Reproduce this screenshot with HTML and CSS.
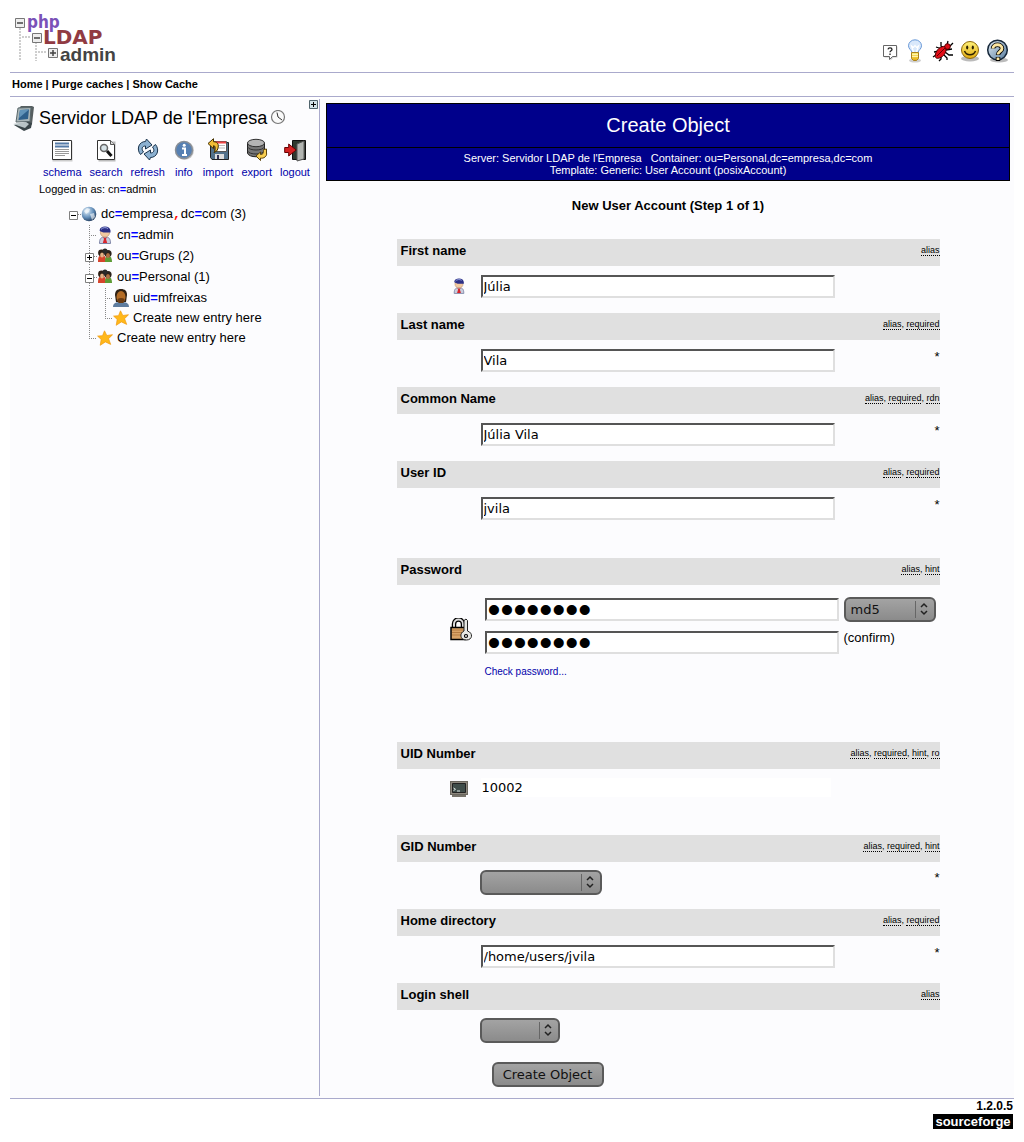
FILE: index.html
```html
<!DOCTYPE html>
<html lang="en">
<head>
<meta charset="utf-8">
<title>phpLDAPadmin - Create Object</title>
<link rel="stylesheet" href="styles.css">
</head>
<body>
<svg class="defs" aria-hidden="true">
  <defs>
    <linearGradient id="steel" x1="0" y1="0" x2="1" y2="1"><stop offset="0" stop-color="#e4eef6"/><stop offset="1" stop-color="#54799c"/></linearGradient>
    <linearGradient id="gold" x1="0" y1="0" x2="0" y2="1"><stop offset="0" stop-color="#fff27a"/><stop offset="1" stop-color="#e2ab10"/></linearGradient>
    <radialGradient id="orb" cx=".35" cy=".3" r=".8"><stop offset="0" stop-color="#e3f1fb"/><stop offset=".55" stop-color="#6590bb"/><stop offset="1" stop-color="#142c4c"/></radialGradient>
  </defs>
  <symbol id="person" viewBox="0 0 16 18">
    <path d="M2.500 17.500C2.500 12.500 4 11 8 11s5.500 1.500 5.500 6.500z" fill="#c9cede" stroke="#8087a8"/>
    <path d="M6 11l2 1 2-1-1 2 1.200 4H5.800L7 13z" fill="#d8252c"/>
    <circle cx="8" cy="6.500" r="4.600" fill="#f2c9a0" stroke="#b78964" stroke-width=".6"/>
    <path d="M2.500 4.500C3 1.500 5 .5 8 .5s5 1.200 5.500 4v2H8c-2 0-4-.5-5.500-2z" fill="#2c2f86"/>
    <path d="M4 3.500C5 1.500 9 1 11 2.500" stroke="#9ba9e0" fill="none"/>
  </symbol>
  <symbol id="group" viewBox="0 0 16 16">
    <path d="M1 14c0-5 1-7 4-7s4 2 4 7z" fill="#d6442c"/>
    <path d="M8 14c0-5 1-6 3.500-6s3.500 2 3.500 6z" fill="#5d9b35"/>
    <circle cx="4.500" cy="5" r="3.400" fill="#2d1f16"/><circle cx="11" cy="5.500" r="3.600" fill="#2b211a"/><circle cx="8" cy="3" r="2.500" fill="#292929"/>
    <ellipse cx="5" cy="7" rx="1.900" ry="2.500" fill="#e5b184"/><ellipse cx="11" cy="7.500" rx="2" ry="2.500" fill="#ad7042"/>
  </symbol>
  <symbol id="star" viewBox="0 0 16 16">
    <path d="M7.500.8l2.300 4.700 5.700-.8-3.900 4 2.100 5.700-5.300-2.500-5.200 3.400 1-5.900L.6 6.100l4.900-.4z" fill="#ffb81a" stroke="#f09a10" stroke-width=".7"/>
  </symbol>
  <symbol id="line-tee" viewBox="0 0 16 20"><path d="M8.500 0v20M10 10.500h6" stroke="#888" stroke-dasharray="1 1" fill="none"/></symbol>
  <symbol id="line-end" viewBox="0 0 16 20"><path d="M8.500 0v11M10 10.500h6" stroke="#888" stroke-dasharray="1 1" fill="none"/></symbol>
  <symbol id="line-down" viewBox="0 0 16 20"><path d="M8.500 0v20" stroke="#888" stroke-dasharray="1 1" fill="none"/></symbol>
  <symbol id="box-root" viewBox="0 0 16 20"><path d="M13 10.500h3" stroke="#888" stroke-dasharray="1 1"/><path d="M4.500 7.500h8v8h-8z" fill="#fff" stroke="#808080"/><path d="M6 11.500h5" stroke="#000"/></symbol>
  <symbol id="box-minus" viewBox="0 0 16 20"><path d="M8.500 0v20M13 10.500h3" stroke="#888" stroke-dasharray="1 1"/><path d="M4.500 7.500h8v8h-8z" fill="#fff" stroke="#808080"/><path d="M6 11.500h5" stroke="#000"/></symbol>
  <symbol id="box-plus" viewBox="0 0 16 20"><path d="M8.500 0v20M13 10.500h3" stroke="#888" stroke-dasharray="1 1"/><path d="M4.500 7.500h8v8h-8z" fill="#fff" stroke="#808080"/><path d="M6 11.500h5M8.500 9v5" stroke="#000"/></symbol>
</svg>

<header class="top">
  <a class="logo" href="#" aria-label="phpLDAPadmin">
    <svg width="110" height="56" viewBox="0 0 110 56">
      <path d="M10 18v33M26 32v19M12 27h9M28 42h9" stroke="#cfcfcf" stroke-width="2" stroke-dasharray="2 1" fill="none"/>
      <g fill="#eee" stroke="#777"><path d="M5.500 8.500h9v9h-9zM22.500 23.500h9v9h-9zM38.500 38.500h9v9h-9z"/></g>
      <path d="M7 13h6M24 28h6M40 43h6M43 40v6" stroke="#444" stroke-width="1.500"/>
      <text class="logo-php" x="17" y="18">php</text>
      <text class="logo-ldap" x="33" y="34">LDAP</text>
      <text class="logo-admin" x="50" y="51">admin</text>
    </svg>
  </a>
  <nav class="top-icons" aria-label="Tools">
    <a href="#" aria-label="Request feature">
      <svg width="18" height="20" viewBox="0 0 18 20"><path d="M2.500 5.500h13v11h-4l-3 3v-3h-6z" fill="#999" opacity=".5"/><path d="M1.500 4.500h13v11h-4L7.500 18.500v-3h-6z" fill="#fff" stroke="#666"/><path d="M6 8.300c.3-1.800 4-1.800 4 .2 0 1.300-2 1.200-2 2.700M8 12.500v1.500" fill="none" stroke="#222" stroke-width="1.300"/></svg>
    </a>
    <a href="#" aria-label="Hints">
      <svg width="20" height="24" viewBox="0 0 20 24"><ellipse cx="9" cy="21.500" rx="6" ry="2" fill="#888" opacity=".4"/><path d="M6 13.500C5.500 11 2.500 10 2.500 6.800a6.500 6 0 0 1 13 0c0 3.200-3 4.200-3.500 6.700z" fill="#d9e8fb" stroke="#6a9ad8"/><path d="M7.500 13L5.500 7l2 1.500L9 6.500l1.500 2 2-1.500-2 6" fill="none" stroke="#fff" stroke-width="1.200"/><path d="M5.500 13.500h7v6l-2 2h-3l-2-2z" fill="url(#gold)" stroke="#aa831d"/><path d="M6 15.500h6M6 17.500h6" stroke="#fff3ad"/></svg>
    </a>
    <a href="#" aria-label="Report a bug">
      <svg width="22" height="22" viewBox="0 0 22 22"><path d="M17 7l4-4M15 5l1-4M12 9L9 6V2M14 10l6-1M10 9L4 7M13 12l4 3h4M8 11L2 12M7 13l-6 4M9 16v3l-2 2M12 15l3 3v2" stroke="#000" stroke-width="1.300" fill="none"/><path d="M3.500 14c1-4 5-8.500 10-7.500 2 5-1.500 10-6 11.500-3 1-5 0-4-4z" fill="#e00d17" stroke="#400"/><circle cx="15.500" cy="6.500" r="2.800" fill="#e00d17" stroke="#500"/><path d="M5 16l8-8" stroke="#600"/></svg>
    </a>
    <a href="#" aria-label="Donate">
      <svg width="20" height="22" viewBox="0 0 20 22"><ellipse cx="10" cy="18.500" rx="9" ry="3" fill="#777" opacity=".5"/><circle cx="10" cy="10" r="8.500" fill="url(#gold)" stroke="#8e6808"/><ellipse cx="7.200" cy="7.500" rx="1.100" ry="2" fill="#2c2000"/><ellipse cx="12.800" cy="7.500" rx="1.100" ry="2" fill="#2c2000"/><path d="M4.500 11c2 5 9 5 11 0" fill="none" stroke="#2c2000" stroke-width="1.500"/></svg>
    </a>
    <a href="#" aria-label="Help">
      <svg width="24" height="24" viewBox="0 0 24 24"><ellipse cx="13" cy="21" rx="9" ry="2.500" fill="#777" opacity=".5"/><circle cx="11.500" cy="11" r="9.800" fill="url(#steel)" stroke="#17283a" stroke-width="1.500"/><path d="M7 9.500c0-5 9-5 9 0 0 3-4 3-4 6.500M12 18v4" fill="none" stroke="#000" stroke-width="4.500"/><path d="M7 9.500c0-5 9-5 9 0 0 3-4 3-4 6M12 18.500v2.500" fill="none" stroke="#fbe5a0" stroke-width="2.800"/></svg>
    </a>
  </nav>
</header>
<nav class="menu"><a href="#">Home</a> | <a href="#">Purge caches</a> | <a href="#">Show Cache</a></nav>

<div class="layout">
  <aside class="sidebar">
    <button class="expand" type="button" aria-label="Expand tree"><svg width="9" height="9" viewBox="0 0 9 9"><path d="M.5.500h8v8h-8z" fill="#d3e3e8" stroke="#50646c"/><path d="M2 4.500h5M4.500 2v5" stroke="#000"/></svg></button>
    <div class="server">
      <svg width="24" height="26" viewBox="0 0 24 26"><path d="M6 4l3-3h11l2 1-2 17-4 5-2-6z" fill="#565e60"/><path d="M6 3l13-.5-1 14L4 17z" fill="#a9b5b8" stroke="#58666a"/><path d="M8 5l9-.5-1 9.500L6.500 15z" fill="#2e5f8b"/><path d="M8 5l9-.5L7 13z" fill="#6193b9"/><path d="M2 20l14-3 4 1-1 5-7 3z" fill="#3a4549"/><path d="M1 19l13-2 3 2-4 4z" fill="#b8c3c6"/></svg>
      <h2>Servidor LDAP de l'Empresa</h2>
      <svg width="16" height="16" viewBox="0 0 16 16"><circle cx="8" cy="7" r="6.500" fill="#fafafa" stroke="#777" stroke-width="1.200"/><path d="M7 2.500L8 7l4 3" fill="none" stroke="#333"/></svg>
    </div>
    <nav class="tools" aria-label="Server actions">
      <a href="#"><svg width="22" height="24" viewBox="0 0 22 24"><path d="M1.500 3.500h20v20h-20z" fill="#ccc"/><path d="M1.500 2.500h19v19h-19z" fill="#fff" stroke="#333"/><path d="M4 5.500h14M4 8.500h14" stroke="#547ba8" stroke-width="2"/><path d="M4 11.500h14M4 13.500h14M4 15.500h14M4 17.500h10" stroke="#999"/></svg>schema</a>
      <a href="#"><svg width="22" height="24" viewBox="0 0 22 24"><path d="M3.500 3.500h17v20h-17z" fill="#bbb"/><path d="M2.500 2.500h13l4 4v15h-17z" fill="#fff" stroke="#333"/><path d="M15.500 2.500v4h4" fill="#ddd" stroke="#555"/><circle cx="9" cy="10" r="3.500" fill="#d7e3e7" stroke="#666" stroke-width="1.500"/><path d="M12 13l4.500 5" stroke="#111" stroke-width="3"/></svg>search</a>
      <a href="#"><svg width="22" height="24" viewBox="0 0 22 24"><g fill="#8cb1d1" stroke="#1a334b"><path d="M3.500 16.500C-1 11 2 3.500 8.500 3.500l1-2.500 5.500 6-6.500 4V8C5 8 4 11 6.500 14z"/><path d="M18.500 6.500c4.500 5.500 1.500 13-5 13l-1 2.500L7 16l6.500-4v3c3.500 0 4.500-3 2-6z"/></g></svg>refresh</a>
      <a href="#"><svg width="22" height="24" viewBox="0 0 22 24"><circle cx="11.500" cy="12.500" r="9.500" fill="#ccc"/><circle cx="11" cy="12" r="8.500" fill="#5680b3" stroke="#8a8f96" stroke-width="1.500"/><path d="M9 10.500h3v6M9 17h5" stroke="#fff" stroke-width="2" fill="none"/><circle cx="11.200" cy="7.200" r="1.500" fill="#fff"/></svg>info</a>
      <a href="#"><svg width="22" height="24" viewBox="0 0 22 24"><path d="M3.500 4.500h18v17H5l-1.500-2z" fill="#52718b" stroke="#222"/><path d="M7.500 3.500h12v10h-12z" fill="#fff" stroke="#555"/><path d="M8 4.500h11" stroke="#e44" stroke-width="2"/><path d="M9 7.500h9M9 10h9" stroke="#bbb"/><path d="M8 16h9v5H8z" fill="#ddd"/><path d="M10 17h2v4h-2z" fill="#335"/><path d="M1 5.500L6.500.7v3c5 0 6 4 3.500 9l-3 2c2-4 1.500-7-.5-7v3z" fill="#f1bd35" stroke="#443000"/></svg>import</a>
      <a href="#"><svg width="22" height="24" viewBox="0 0 22 24"><path d="M1.500 5v10c1 5 16 5 17 0V5z" fill="#777" stroke="#222"/><ellipse cx="10" cy="5" rx="8.500" ry="3.700" fill="#b5b5b5" stroke="#333"/><path d="M1.500 9c2 4 15 4 17 0M1.500 13c2 4 15 4 17 0" fill="none" stroke="#333"/><path d="M20.500 11v4c1 3-3 6-6 5v2.500L10 18l4.500-4v2.500c3 0 3-2 3-5z" fill="#f8ce51" stroke="#5b430b"/></svg>export</a>
      <a href="#"><svg width="22" height="24" viewBox="0 0 22 24"><path d="M8.500 2.500h13v19h-13z" fill="#30392e" stroke="#111"/><path d="M13 6l7-3v18l-7 2z" fill="#b2b5b1" stroke="#555"/><path d="M.7 9.500h4V6l7.500 6-7.500 6v-3.500h-4z" fill="#d32222" stroke="#670000"/></svg>logout</a>
    </nav>
    <p class="login"><span>Logged in as:</span> cn<b>=</b>admin</p>

    <ul class="tree">
      <li><svg class="cell"><use href="#box-root"/></svg><svg class="icon" viewBox="0 0 16 16"><circle cx="8" cy="8" r="7.300" fill="url(#orb)"/><path d="M3 5l3-3 3 1-1 3-3 2zM9 8l4-1 1 4-3 3z" fill="#fff" opacity=".6"/></svg><a href="#">dc<b>=</b>empresa<i>,</i>dc<b>=</b>com (3)</a></li>
      <li><span class="cell"></span><svg class="cell"><use href="#line-tee"/></svg><svg class="icon tall"><use href="#person"/></svg><a href="#">cn<b>=</b>admin</a></li>
      <li><span class="cell"></span><svg class="cell"><use href="#box-plus"/></svg><svg class="icon"><use href="#group"/></svg><a href="#">ou<b>=</b>Grups (2)</a></li>
      <li><span class="cell"></span><svg class="cell"><use href="#box-minus"/></svg><svg class="icon"><use href="#group"/></svg><a href="#">ou<b>=</b>Personal (1)</a></li>
      <li><span class="cell"></span><svg class="cell"><use href="#line-down"/></svg><svg class="cell"><use href="#line-tee"/></svg><svg class="icon tall" viewBox="0 0 16 18"><path d="M0 18c0-4 3-5 8-5s8 1 8 5z" fill="#5d7c9f"/><path d="M2 6c0-4 2-6 6-6s6 2 6 6l-1 7H3z" fill="#2e2014"/><ellipse cx="8" cy="8" rx="4.500" ry="6" fill="#b36c26"/><path d="M4.500 10c2-1.500 5-1.500 7 0L10.500 14h-5z" fill="#6b3b12"/></svg><a href="#">uid<b>=</b>mfreixas</a></li>
      <li class="create"><span class="cell"></span><svg class="cell"><use href="#line-down"/></svg><svg class="cell"><use href="#line-end"/></svg><svg class="icon"><use href="#star"/></svg><a href="#">Create new entry here</a></li>
      <li class="create"><span class="cell"></span><svg class="cell"><use href="#line-end"/></svg><svg class="icon"><use href="#star"/></svg><a href="#">Create new entry here</a></li>
    </ul>
  </aside>

  <main class="content">
    <div class="banner">
      <h1>Create Object</h1>
      <p>Server: <strong>Servidor LDAP de l'Empresa</strong> &nbsp; Container: <strong>ou=Personal,dc=empresa,dc=com</strong><br>Template: <strong>Generic: User Account</strong> (<strong>posixAccount</strong>)</p>
    </div>
    <h3 class="step">New User Account (Step 1 of 1)</h3>
    <form class="form">
      <section class="field">
        <div class="bar"><label for="first">First name</label><span class="notes"><abbr>alias</abbr></span></div>
        <div class="row"><span class="lead"><svg width="14" height="16"><use href="#person"/></svg></span><input class="text" id="first" type="text" value="Júlia"></div>
      </section>
      <section class="field">
        <div class="bar"><label for="last">Last name</label><span class="notes"><abbr>alias</abbr>, <abbr>required</abbr></span></div>
        <div class="row"><span class="lead"></span><input class="text" id="last" type="text" value="Vila"><span class="mark">*</span></div>
      </section>
      <section class="field">
        <div class="bar"><label for="common">Common Name</label><span class="notes"><abbr>alias</abbr>, <abbr>required</abbr>, <abbr>rdn</abbr></span></div>
        <div class="row"><span class="lead"></span><input class="text" id="common" type="text" value="Júlia Vila"><span class="mark">*</span></div>
      </section>
      <section class="field spaced">
        <div class="bar"><label for="user">User ID</label><span class="notes"><abbr>alias</abbr>, <abbr>required</abbr></span></div>
        <div class="row"><span class="lead"></span><input class="text" id="user" type="text" value="jvila"><span class="mark">*</span></div>
      </section>
      <section class="field password">
        <div class="bar"><label for="pass">Password</label><span class="notes"><abbr>alias</abbr>, <abbr>hint</abbr></span></div>
        <div class="row">
          <span class="lead"><svg width="24" height="24" viewBox="0 0 24 24"><path d="M5 10V6c0-6 9-6 9 0v4" fill="none" stroke="#000" stroke-width="4.500"/><path d="M5 10V6c0-6 9-6 9 0v4" fill="none" stroke="#ddd" stroke-width="2"/><path d="M2 9.500h14v12H2z" fill="#d9a468" stroke="#000" stroke-width="1.500"/><path d="M3 12h12M3 14.500h12M3 17h12" stroke="#b57c42"/><path d="M15 2.500l2-1.500 1.500 1.500V13c6 2 5 9-1 9-7 0-7-7-2.500-9z" fill="#e7e8e4" stroke="#222"/><circle cx="17" cy="18" r="1.500" fill="#fff" stroke="#000" stroke-width="1.200"/></svg></span>
          <div class="secrets">
            <input class="text" id="pass" type="password" value="jvila123">
            <select class="enc" aria-label="Encryption"><option>md5</option></select>
            <input class="text" id="confirm" type="password" value="jvila123">
            <label for="confirm">(confirm)</label>
            <a class="check" href="#">Check password...</a>
          </div>
        </div>
      </section>
      <section class="field tall-row">
        <div class="bar"><label for="uid">UID Number</label><span class="notes"><abbr>alias</abbr>, <abbr>required</abbr>, <abbr>hint</abbr>, <abbr>ro</abbr></span></div>
        <div class="row"><span class="lead"><svg width="18" height="16" viewBox="0 0 18 16"><path d="M0 0h18v14h-2v2H2v-2H0z" fill="#77736a"/><path d="M.5.500h17v13H.5z" fill="#8d887e" stroke="#6b675f"/><path d="M2.500 2.500h13v9h-13z" fill="#3f4d4a" stroke="#222"/><path d="M3.500 7l2 1.300-2 1.300M7 10h3" fill="none" stroke="#dfe8e4"/></svg></span><input class="plain" id="uid" type="text" value="10002" readonly></div>
      </section>
      <section class="field">
        <div class="bar"><label for="gid">GID Number</label><span class="notes"><abbr>alias</abbr>, <abbr>required</abbr>, <abbr>hint</abbr></span></div>
        <div class="row pick"><span class="lead"></span><select class="gid" id="gid"><option></option></select><span class="mark">*</span></div>
      </section>
      <section class="field">
        <div class="bar"><label for="home">Home directory</label><span class="notes"><abbr>alias</abbr>, <abbr>required</abbr></span></div>
        <div class="row"><span class="lead"></span><input class="text" id="home" type="text" value="/home/users/jvila"><span class="mark">*</span></div>
      </section>
      <section class="field">
        <div class="bar"><label for="shell">Login shell</label><span class="notes"><abbr>alias</abbr></span></div>
        <div class="row pick"><span class="lead"></span><select class="shell" id="shell"><option></option></select></div>
      </section>
      <button class="submit" type="submit">Create Object</button>
    </form>
  </main>
</div>

<footer class="foot">
  <span class="version">1.2.0.5</span>
  <a class="sf" href="#">sourceforge</a>
</footer>
</body>
</html>
```
FILE: styles.css
```css
* { box-sizing: border-box; }

body {
  margin: 0;
  padding: 10px;
  background: #fff;
  color: #000;
  font: 12px/16px "Liberation Sans", Arial, sans-serif;
}

a { color: inherit; text-decoration: none; }
h1, h2, h3, p, ul { margin: 0; padding: 0; font-weight: normal; }
svg { display: block; flex: none; }
.defs { position: absolute; width: 0; height: 0; }

/* header */
.top {
  display: flex;
  justify-content: space-between;
  height: 63px;
  border-bottom: 1px solid #aaaacc;
}
.logo-php { font: bold 17px "DejaVu Sans Condensed", "DejaVu Sans", sans-serif; fill: #7a52b8; }
.logo-ldap { font: bold 20px "DejaVu Sans", sans-serif; fill: #913b43; }
.logo-admin { font: bold 19px "Liberation Sans", sans-serif; fill: #444; }
.top-icons {
  display: flex;
  align-items: center;
  gap: 6px;
  padding: 20px 4px 0 0;
}
.menu {
  height: 24px;
  padding-left: 2px;
  border-bottom: 1px solid #aaaacc;
  font-size: 11px;
  font-weight: bold;
  line-height: 23px;
}

/* columns */
.layout {
  display: grid;
  grid-template-columns: 310px 1fr;
  margin-top: 2px;
  padding-bottom: 2px;
  background: #fcfcfe;
  border-bottom: 1px solid #aaaacc;
}
.sidebar {
  position: relative;
  border-right: 1px solid #aaaacc;
}
.expand {
  position: absolute;
  top: 1px;
  right: 1px;
  padding: 0;
  border: 0;
  background: none;
}
.server {
  display: flex;
  align-items: center;
  gap: 3px;
  padding: 6px 0 0 2px;
}
.server h2 { font-size: 18px; line-height: 24px; }
.tools {
  display: flex;
  gap: 8px;
  padding: 7px 0 0 33px;
  color: #0000aa;
  font-size: 11px;
}
.tools a { display: flex; flex-direction: column; align-items: center; gap: 2px; }
.login { padding: 2px 0 0 29px; font-size: 11px; line-height: 15px; }
.login b, .tree b { color: #0000ff; }

.tree { padding: 6px 0 0 55px; list-style: none; font-size: 13px; }
.tree li { display: flex; align-items: center; height: 21px; }
.tree .create { height: 20px; }
.tree .cell { flex: none; width: 16px; height: 20px; }
.tree .icon { width: 16px; height: 16px; margin-right: 4px; }
.tree .tall { height: 18px; }
.tree i { color: #ff0000; font: bold 13px "Liberation Mono", monospace; }

/* main */
.content { padding: 4px 4px 9px 6px; }
.banner {
  background: #00008b;
  border: 1px solid #000;
  color: #fff;
  text-align: center;
}
.banner h1 { font-size: 20px; line-height: 43px; border-bottom: 1px solid #000; }
.banner p { padding: 4px 0; font-size: 11px; line-height: 12px; }
.banner strong { font-weight: normal; }
.step { padding: 17px 0 25px; font-size: 13px; font-weight: bold; text-align: center; }

.form { max-width: 543px; margin: 0 auto; }
.bar {
  display: flex;
  justify-content: space-between;
  height: 27px;
  padding: 4px 0 0 4px;
  background: #e0e0e0;
}
.bar label { font-size: 13px; font-weight: bold; }
.notes { font-size: 9px; line-height: 14px; }
.notes abbr { border-bottom: 1px dotted #000; }
.row { display: flex; align-items: flex-start; min-height: 47px; padding-top: 9px; }
.spaced .row { min-height: 70px; }
.tall-row .row { min-height: 66px; }
.pick { padding-top: 8px; }
.lead { display: flex; justify-content: center; align-items: center; flex: none; width: 84px; height: 22px; padding-left: 41px; }
.pick .lead { width: 83px; }
.mark { margin-left: auto; font-size: 13px; }

.text, .plain {
  height: 23px;
  width: 354px;
  padding: 0 1px;
  font: 13px "DejaVu Sans", sans-serif;
  color: #000;
}
.text {
  background: #fff;
  border: 2px solid #dfdfdf;
  border-top-color: #555;
  border-left-color: #555;
}
.plain { height: 19px; width: 350px; border: 0; background: #fff; }

.password .row { min-height: 157px; padding-top: 12px; }
.password .lead { width: 88px; height: 66px; }
.secrets { display: grid; grid-template-columns: 354px 92px; column-gap: 5px; row-gap: 8px; font-size: 13px; }
.secrets .text { height: 23px; margin-top: 1px; font: 37px "Liberation Sans", sans-serif; }
.check { padding-top: 2px; color: #0000aa; font-size: 10px; }

select, .submit {
  height: 25px;
  border: 2px solid #5a5a5a;
  border-radius: 6px;
  background-color: #949494;
  background-image: linear-gradient(#a3a3a3, #8b8b8b);
  color: #111;
  font: 13px "DejaVu Sans", sans-serif;
}
select {
  appearance: none;
  padding: 0 24px 0 5px;
  background-image:
    url("data:image/svg+xml,%3Csvg xmlns='http://www.w3.org/2000/svg' width='20' height='21' viewBox='0 0 20 21'%3E%3Cpath d='M1.500 2v17' stroke='%23666'/%3E%3Cpath d='M7 8l3-3 3 3M7 12l3 3 3-3' fill='none' stroke='%23222' stroke-width='1.500'/%3E%3C/svg%3E"),
    linear-gradient(#a3a3a3, #8b8b8b);
  background-repeat: no-repeat;
  background-position: right center, 0 0;
}
.enc { width: 92px; }
.gid { width: 122px; }
.shell { width: 80px; }
.submit { display: block; width: 112px; margin: 5px 0 0 95px; padding: 0; }

/* footer */
.foot {
  display: flex;
  flex-direction: column;
  align-items: flex-end;
  padding-right: 1px;
}
.version { font-weight: bold; line-height: 15px; }
.sf {
  width: 80px;
  background: #000;
  color: #fff;
  font: bold 13px/15px "Liberation Sans", sans-serif;
  text-align: center;
}
```
